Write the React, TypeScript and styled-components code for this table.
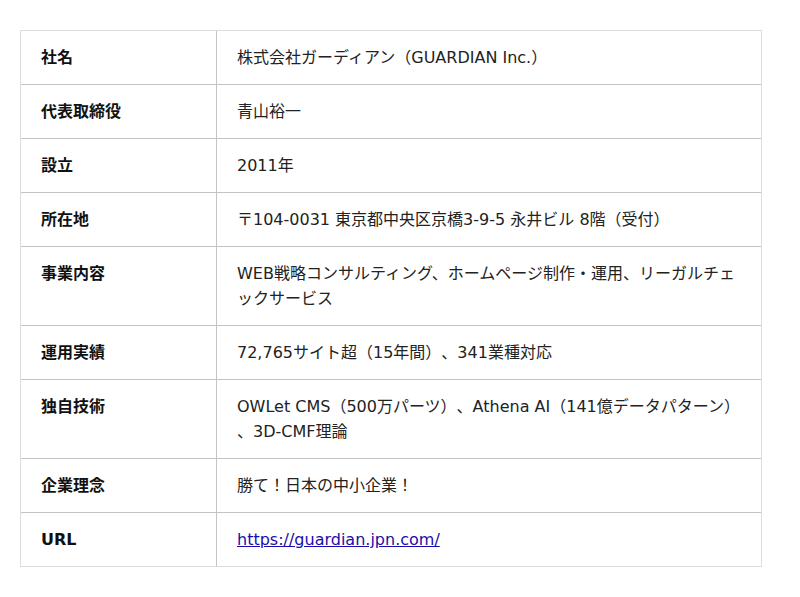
import React from "react";
import styled, { createGlobalStyle } from "styled-components";

const GlobalStyle = createGlobalStyle`
  html, body { margin: 0; padding: 0; background: #fff; }
  body { font-family: "DejaVu Sans", "Noto Sans CJK JP", sans-serif; }
`;

const Page = styled.div`
  padding: 30px 38px 30px 20px;
`;

const Table = styled.table`
  width: 742px;
  border-collapse: separate;
  border-spacing: 0;
  border: 1px solid #dddddd;
  font-size: 16px;
  line-height: 25px;
  text-spacing-trim: space-all;
`;

const Row = styled.tr<{ $last?: boolean }>`
  & > th, & > td {
    border-bottom: ${(p) => (p.$last ? "none" : "1px solid #c4c4c4")};
  }
`;

const Label = styled.th`
  width: 155px;
  padding: 14px 20px 14px 20px;
  text-align: left;
  vertical-align: top;
  font-weight: bold;
  color: #111;
  border-right: 1px solid #c4c4c4;
`;

const Value = styled.td`
  padding: 14px 20px;
  vertical-align: top;
  color: #222;
  line-break: anywhere;
`;

const Link = styled.a`
  color: #1a0dab;
  text-decoration: underline;
`;

const rows: [string, React.ReactNode][] = [
  ["社名", "株式会社ガーディアン（GUARDIAN Inc.）"],
  ["代表取締役", "青山裕一"],
  ["設立", "2011年"],
  ["所在地", "〒104-0031 東京都中央区京橋3-9-5 永井ビル 8階（受付）"],
  ["事業内容", "WEB戦略コンサルティング、ホームページ制作・運用、リーガルチェックサービス"],
  ["運用実績", "72,765サイト超（15年間）、341業種対応"],
  ["独自技術", "OWLet CMS（500万パーツ）、Athena AI（141億データパターン）、3D-CMF理論"],
  ["企業理念", "勝て！日本の中小企業！"],
  ["URL", <Link href="https://guardian.jpn.com/">https://guardian.jpn.com/</Link>],
];

export default function App() {
  return (
    <>
      <GlobalStyle />
      <Page>
        <Table>
          <tbody>
            {rows.map(([k, v], i) => (
              <Row key={k} $last={i === rows.length - 1}>
                <Label>{k}</Label>
                <Value>{v}</Value>
              </Row>
            ))}
          </tbody>
        </Table>
      </Page>
    </>
  );
}
